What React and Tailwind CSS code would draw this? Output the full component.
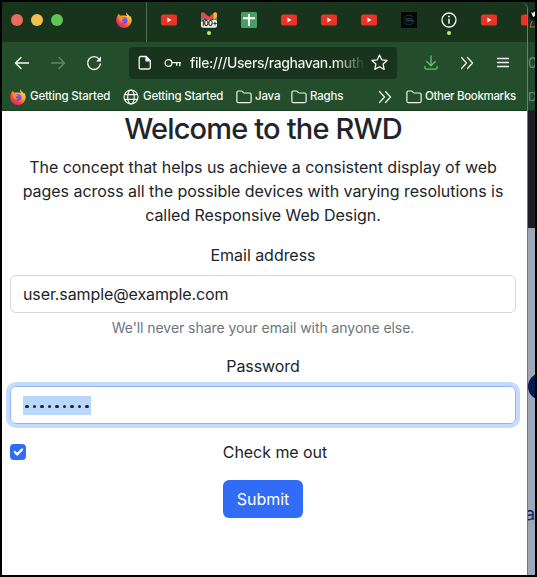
import React from "react";

const YouTube = () => (
  <svg viewBox="0 0 16 12" className="h-[12px] w-4 shrink-0">
    <rect x="0" y="0.5" width="16" height="11" rx="2.6" fill="#ea3323" />
    <path d="M6.3 3.6v4.8L10.5 6z" fill="#fff" />
  </svg>
);

const Firefox = () => (
  <svg viewBox="0 0 16 16" className="size-4 shrink-0">
    <defs>
      <linearGradient id="fox" x1="0.85" y1="0.1" x2="0.2" y2="0.95">
        <stop offset="0" stopColor="#ffe94a" />
        <stop offset="0.4" stopColor="#ff9a2e" />
        <stop offset="0.7" stopColor="#f8453f" />
        <stop offset="1" stopColor="#d9217f" />
      </linearGradient>
      <linearGradient id="globe" x1="0.8" y1="0" x2="0.3" y2="1">
        <stop offset="0" stopColor="#a05bf0" />
        <stop offset="1" stopColor="#4a47c8" />
      </linearGradient>
    </defs>
    <path d="M10.3 0.2c-.5 1.500 0 2.700 1 3.600l-3.700-.2c-1.300-.3-2.700-.1-3.200.1-.8-.5-1.300-1.200-1.500-2C1.600 3 .2 5.600.2 8.500a7.700 7.400 0 0 0 15.500 0c0-2-.6-3.800-1.900-5.100.1.700 0 1-.2 1.400C13 2.600 10.800 2.200 10.300.2z" fill="url(#fox)" />
    <circle cx="8.100" cy="8.300" r="3.300" fill="url(#globe)" />
    <path d="M2.600 5.600c1.300-.8 2.500-.6 3.200 0l2.500.3c0 .8-1.200 1.100-1.800 1.400-.1.900-.5 1-.9 1.500.8.900 2 .5 3 .4-1.200 2-4.500 1.700-5.200-.8z" fill="#ff8a2c" />
  </svg>
);

const Gmail = () => (
  <div className="relative size-4 shrink-0">
    <svg viewBox="0 0 16 16" className="size-4">
      <path d="M0 3.500 3.500 6v7.500H1.200C.5 13.500 0 13 0 12.300z" fill="#4a80ed" />
      <path d="M16 3.500 12.500 6v7.500h2.300c.7 0 1.200-.5 1.200-1.200z" fill="#4aa657" />
      <path d="M12.500 2.200 16 .8V5l-3.500 2.500z" fill="#f4bb35" />
      <path d="M0 2.200C0 .4 1.800-.1 3 .8l5 4 5-4c1.200-.9 3-.4 3 1.400v1.500L8 9.500 0 3.700z" fill="#e34b3d" />
      <path d="M12.500 1.200C14 0 16 .5 16 2.200v2l-3.500 2.700z" fill="#f4bb35" />
      <rect x="0" y="8" width="16" height="7.800" rx="2" fill="#eeeeee" />
    </svg>
    <span className="absolute top-[8px] left-0 w-4 text-center text-[7.5px] leading-[8px] font-semibold tracking-[-0.6px] text-[#202020]">100+</span>
  </div>
);

const Sheets = () => (
  <svg viewBox="0 0 16 16" className="size-4 shrink-0">
    <rect width="16" height="16" rx="1.200" fill="#4b9e63" />
    <path d="M7.900 2v12M2 6.200h12" stroke="#fff" strokeWidth="1.900" fill="none" />
  </svg>
);

const DarkSite = () => (
  <svg viewBox="0 0 16 16" className="size-4 shrink-0">
    <rect width="16" height="16" fill="#030706" />
    <g fill="none" strokeWidth="0.700">
      <path d="M3 6.500C4 3 10 1.700 12.500 5.500M3 9.500c1.500 4.500 8 4.500 10-.5" stroke="#31464b" />
      <path d="M4 6.900h7.500M5 8.800h8" stroke="#4d7180" />
    </g>
  </svg>
);

const Info = () => (
  <svg viewBox="0 0 16 16" className="size-4 shrink-0" fill="none" stroke="#f4f8f4">
    <circle cx="8" cy="8" r="7" strokeWidth="1.300" />
    <path d="M8 6.700v5" strokeWidth="1.500" />
    <circle cx="8" cy="4.500" r="0.900" fill="#f4f8f4" stroke="none" />
  </svg>
);

const Folder = () => (
  <svg viewBox="0 0 16 14" className="h-[14px] w-4 shrink-0" fill="none" stroke="#eef5ee" strokeWidth="1.200" strokeLinejoin="round">
    <path d="M.9 2.400Q.9 1 2.300 1h3.100q.6 0 1 .5l1 1.200q.3.300.8.300h5.400q1.500 0 1.500 1.500v6.700q0 1.500-1.500 1.500H2.400Q.9 12.700.9 11.200z" />
  </svg>
);

const GlobeIcon = () => (
  <svg viewBox="0 0 16 16" className="size-4 shrink-0" fill="none" stroke="#f0f6f0" strokeWidth="1.200">
    <circle cx="8" cy="8" r="7" />
    <ellipse cx="8" cy="8" rx="3.300" ry="7" />
    <path d="M1.400 5.700h13.200M1.400 10.300h13.200" />
  </svg>
);

const Chevrons = () => (
  <svg viewBox="0 0 14 14" className="size-[14px] shrink-0" fill="none" stroke="#f0f6f0" strokeWidth="1.300" strokeLinecap="round" strokeLinejoin="round">
    <path d="m1.500 1.500 5 5.500-5 5.500M7.500 1.500l5 5.500-5 5.500" />
  </svg>
);

const Arrow = ({ className }) => (
  <svg viewBox="0 0 16 14" className={className} fill="none" stroke="currentColor" strokeWidth="1.400" strokeLinecap="round" strokeLinejoin="round">
    <path d="M1.500 7h13M7 1.500 1.500 7 7 12.500" />
  </svg>
);

const Tab = ({ children, dot }) => (
  <div className="relative flex h-full w-10 shrink-0 items-center justify-center pb-1">
    {children}
    {dot && <span className="absolute bottom-[7px] left-[18px] size-1 rounded-full bg-[#b7f56b]" />}
  </div>
);

const TabStrip = () => (
  <div className="flex h-10 shrink-0 bg-[#18341d]">
    <div className="flex w-[102px] shrink-0 items-center gap-2 pb-1 pl-[9px]">
      <span className="size-3 rounded-full bg-[#ec6a5e]" />
      <span className="size-3 rounded-full bg-[#f4bf4f]" />
      <span className="size-3 rounded-full bg-[#61c554]" />
    </div>
    <Tab><Firefox /></Tab>
    <div className="mr-[2px] ml-[2px] w-px shrink-0 bg-[#4b6a50]" />
    <Tab><YouTube /></Tab>
    <Tab dot><Gmail /></Tab>
    <Tab><Sheets /></Tab>
    <Tab><YouTube /></Tab>
    <Tab><YouTube /></Tab>
    <Tab><YouTube /></Tab>
    <Tab><DarkSite /></Tab>
    <Tab dot><Info /></Tab>
    <Tab><YouTube /></Tab>
    <Tab><YouTube /></Tab>
  </div>
);

const NavBar = () => (
  <div className="flex h-10 shrink-0 items-center pt-px pl-[12px] text-[#f4f8f4]">
    <Arrow className="h-[14px] w-4 shrink-0" />
    <Arrow className="ml-5 h-[14px] w-4 shrink-0 rotate-180 text-[#64846a]" />
    <svg viewBox="0 0 16 16" className="ml-5 size-4 shrink-0" fill="none" stroke="currentColor" strokeWidth="1.400">
      <path d="M13.200 4.200A6.400 6.400 0 1 0 14.400 9" strokeLinecap="round" />
      <path d="M15 1.500V6.500H10z" fill="currentColor" stroke="none" />
    </svg>
    <div className="ml-[27px] flex h-8 w-[268px] shrink-0 items-center rounded-[4px] bg-[#18341d] pl-[9px]">
      <svg viewBox="0 0 14 16" className="h-4 w-[14px] shrink-0" fill="none" stroke="currentColor" strokeWidth="1.300" strokeLinejoin="round">
        <path d="M1.200 3Q1.200 1.500 2.700 1.500H8L12.300 5.800V12.500Q12.300 14 10.800 14H2.700Q1.200 14 1.200 12.500z" />
        <path d="M8 1.500V5.800H12.300z" fill="currentColor" />
      </svg>
      <svg viewBox="0 0 18 12" className="ml-3 h-3 w-[18px] shrink-0" fill="none" stroke="currentColor" strokeWidth="1.300">
        <circle cx="4.500" cy="6" r="3.400" />
        <path d="M8 5.700h9M12.700 5.700v3M15.800 5.700v3.500" />
      </svg>
      <div className="ml-[8px] w-[178px] shrink-0 overflow-hidden bg-linear-to-r from-[#f4f8f4] from-82% to-[#18341d] to-99% bg-clip-text text-[14px] leading-5 font-medium tracking-[-0.42px] whitespace-nowrap text-transparent">
        file:///Users/raghavan.muth
      </div>
      <svg viewBox="0 0 16 16" className="ml-[3px] size-[17px] shrink-0" fill="none" stroke="currentColor" strokeWidth="1.200" strokeLinejoin="round">
        <path d="m8 .9 2.100 4.600 5 .6-3.700 3.400 1 5L8 12l-4.400 2.500 1-5L.9 6.100l5-.6z" />
      </svg>
    </div>
    <svg viewBox="0 0 14 16" className="ml-[27px] h-4 w-[14px] shrink-0" fill="none" stroke="#61c46f" strokeWidth="1.300" strokeLinecap="round" strokeLinejoin="round">
      <path d="M7 1v9.500M2.800 6.500 7 10.700l4.200-4.200M.9 11.500v1.200q0 1.500 1.500 1.500h9.200q1.500 0 1.500-1.500v-1.200" />
    </svg>
    <div className="ml-[22px] flex"><Chevrons /></div>
    <svg viewBox="0 0 14 14" className="ml-[22px] size-[14px] shrink-0" stroke="currentColor" strokeWidth="1.300" strokeLinecap="round">
      <path d="M1.500 2.500h11M1.500 6.500h11M1.500 10.500h11" />
    </svg>
  </div>
);

const Bookmarks = () => (
  <div className="flex h-[29px] shrink-0 items-center border-b border-[#1b3d22] pt-[2px] pl-2 text-[11.5px] font-medium whitespace-nowrap text-[#f4f8f4]">
    <Firefox />
    <span className="ml-1 w-[93px] shrink-0 tracking-[-0.2px]">Getting Started</span>
    <GlobeIcon />
    <span className="ml-1 w-[93px] shrink-0 tracking-[-0.2px]">Getting Started</span>
    <Folder />
    <span className="ml-[3px] w-[36px] shrink-0 tracking-[-0.2px]">Java</span>
    <Folder />
    <span className="ml-[3px] w-[68px] shrink-0 tracking-[-0.2px]">Raghs</span>
    <Chevrons />
    <div className="w-[14px] shrink-0" />
    <Folder />
    <span className="ml-[3px] tracking-[-0.33px]">Other Bookmarks</span>
  </div>
);

const Page = () => (
  <form className="flex flex-1 flex-col bg-white pr-[11px] pl-2 text-center text-[16px] leading-6 text-[#212529]">
    <h1 className="mb-2 h-9 text-[29px] leading-9 font-medium tracking-[-0.82px] whitespace-nowrap">Welcome to the RWD</h1>
    <p className="mb-4 tracking-[-0.04px] whitespace-nowrap">
      The concept that helps us achieve a consistent display of web
      <br />
      pages across all the possible devices with varying resolutions is
      <br />
      called Responsive Web Design.
    </p>
    <label className="mb-2 tracking-[-0.04px]">Email address</label>
    <div className="flex h-[38px] shrink-0 items-center rounded-[6px] border border-[#d3d7de] px-3 tracking-[-0.1px]">user.sample@example.com</div>
    <div className="mt-1 mb-4 text-[14px] leading-[21px] tracking-[-0.06px] text-[#6c757d]">We'll never share your email with anyone else.</div>
    <label className="mb-2 tracking-[-0.08px]">Password</label>
    <div className="mb-4 flex h-[38px] shrink-0 items-center rounded-[6px] border border-[#91b7fb] px-3 ring-4 ring-[#c6dafb]">
      <div className="flex h-[19px] w-[68px] items-center gap-1 bg-[#b9d6fb] pt-[3px] pl-[2px]">
        {Array.from({ length: 9 }, (_, i) => (
          <span key={i} className="size-[3.5px] shrink-0 rounded-full bg-[#212529]" />
        ))}
      </div>
    </div>
    <div className="mb-4 flex items-center">
      <span className="flex size-4 shrink-0 items-center justify-center rounded-[4px] bg-[#306cf5]">
        <svg viewBox="0 0 20 20" className="size-4" fill="none" stroke="#fff" strokeWidth="3" strokeLinecap="round" strokeLinejoin="round">
          <path d="m6 10 3 3 6-6" />
        </svg>
      </span>
      <label className="ml-2 flex-1 tracking-[-0.05px]">Check me out</label>
    </div>
    <div className="mx-auto flex h-[38px] w-[80px] shrink-0 items-center justify-center rounded-[6px] bg-[#306cf5] text-white">Submit</div>
  </form>
);

const BehindWindow = () => (
  <div className="flex w-[7px] shrink-0 flex-col overflow-hidden bg-[#9ea6b7]">
    <div className="h-10 shrink-0 bg-[#18341d]">
      <svg viewBox="0 0 7 40" className="h-10 w-[7px]">
        <circle cx="6" cy="13" r="5" fill="#050505" />
        <path d="m3 10 2 1 2-2v5l-2 1z" fill="#eee" />
        <path d="m4 19-2 6h5" stroke="#c96a2e" fill="none" />
      </svg>
    </div>
    <div className="flex h-10 shrink-0 items-center bg-[#21482a] text-[14px] text-[#6f8a74]">0</div>
    <div className="flex h-[29px] shrink-0 items-center border-b border-[#17301c] bg-[#21482a] pt-[2px] text-[12px] text-[#6f8a74]">D</div>
    <div className="h-[117px] shrink-0 bg-[#1d1c22]" />
    <div className="mt-[145px] h-[27px] w-[27px] shrink-0 rounded-full bg-[#08194d]" />
    <div className="mt-[104px] -ml-[3px] shrink-0 text-[18px] leading-5 text-[#152560]">a</div>
  </div>
);

export default function App() {
  return (
    <div className="flex h-[577px] w-[537px] overflow-hidden border-2 border-black bg-[#18341d] font-[Inter,'Liberation_Sans',sans-serif]">
      <div className="flex w-[526px] shrink-0 flex-col overflow-hidden rounded-tr-[7px] border-r border-[#6f7a78] bg-[#244e2b]">
        <TabStrip />
        <NavBar />
        <Bookmarks />
        <Page />
      </div>
      <BehindWindow />
    </div>
  );
}
